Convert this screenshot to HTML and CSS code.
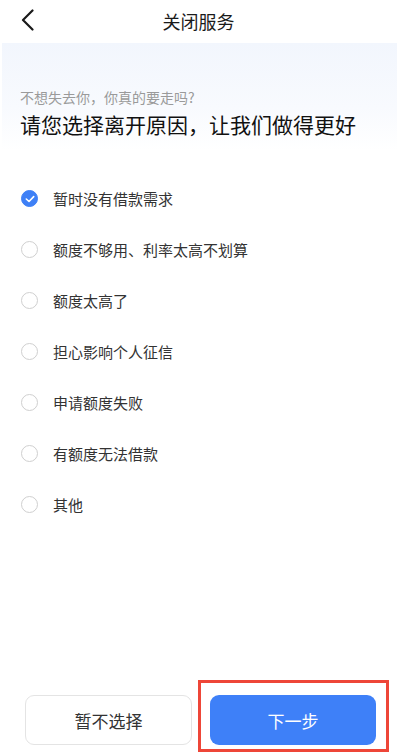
FILE: index.html
```html
<!DOCTYPE html>
<html lang="zh">
<head>
<meta charset="utf-8">
<link rel="stylesheet" href="styles.css">
</head>
<body>
<div class="page">
  <header class="topbar">
    <div class="back">
      <svg width="13" height="22" viewBox="0 0 13 22"><path d="M11.5 1.5 L2 11 L11.5 20.5" fill="none" stroke="#1a1a1a" stroke-width="2.2" stroke-linecap="round" stroke-linejoin="round"/></svg>
    </div>
    <div class="title">关闭服务</div>
    <div></div>
  </header>
  <section class="hero">
    <p class="sub">不想失去你，你真的要走吗?</p>
    <h1 class="head">请您选择离开原因，让我们做得更好</h1>
  </section>
  <ul class="options">
    <li class="opt">
      <span class="radio checked"><svg width="10" height="8" viewBox="0 0 10 8"><path d="M1.3 4 L4 6.5 L8.7 1.6" fill="none" stroke="#fff" stroke-width="1.6" stroke-linecap="round" stroke-linejoin="round"/></svg></span>
      <span>暂时没有借款需求</span>
    </li>
    <li class="opt"><span class="radio"></span><span>额度不够用、利率太高不划算</span></li>
    <li class="opt"><span class="radio"></span><span>额度太高了</span></li>
    <li class="opt"><span class="radio"></span><span>担心影响个人征信</span></li>
    <li class="opt"><span class="radio"></span><span>申请额度失败</span></li>
    <li class="opt"><span class="radio"></span><span>有额度无法借款</span></li>
    <li class="opt"><span class="radio"></span><span>其他</span></li>
  </ul>
  <footer class="footer">
    <button class="btn ghost">暂不选择</button>
    <div class="highlight">
      <button class="btn primary">下一步</button>
    </div>
  </footer>
</div>
</body>
</html>
```
FILE: styles.css
```css
* { box-sizing: border-box; }
html, body { margin: 0; padding: 0; background: #fff; }
body {
  font-family: "Noto Sans CJK SC", "Noto Sans", sans-serif;
  color: #222;
}
.page {
  display: flex;
  flex-direction: column;
  min-height: 756px;
  height: 756px;
}
.topbar {
  height: 43px;
  display: grid;
  grid-template-columns: 60px 1fr 60px;
  align-items: center;
}
.back {
  padding-left: 21px;
  display: flex;
  align-items: center;
  height: 43px;
  padding-bottom: 4px;
}
.title {
  text-align: center;
  font-size: 18px;
  color: #1a1a1a;
  padding-bottom: 2px;
}
.hero {
  margin-left: 2px;
  height: 108px;
  padding: 44px 0 0 18px;
  background: linear-gradient(180deg, #f2f6fd 0%, #f8fafe 60%, #ffffff 100%);
}
.sub {
  margin: 0;
  font-size: 14px;
  line-height: 20px;
  color: #9a9a9a;
}
.head {
  margin: 3px 0 0;
  font-size: 21px;
  font-weight: normal;
  line-height: 28px;
  color: #111;
}
.options {
  list-style: none;
  margin: 0;
  padding: 22px 0 0 21px;
}
.opt {
  height: 51px;
  display: flex;
  align-items: center;
  gap: 15px;
  font-size: 15px;
  color: #333;
}
.radio {
  width: 17px;
  height: 17px;
  border-radius: 50%;
  border: 1px solid #cfcfcf;
  display: flex;
  align-items: center;
  justify-content: center;
  flex: none;
}
.radio.checked {
  background: #3e80f6;
  border-color: #3e80f6;
}
.footer {
  margin-top: auto;
  display: flex;
  align-items: flex-end;
  padding: 0 8px 4px 25px;
  gap: 6px;
}
.btn {
  font-family: inherit;
  height: 50px;
  border-radius: 9px;
  font-size: 17px;
  cursor: pointer;
}
.ghost {
  width: 167px;
  margin-bottom: 7px;
  background: #fff;
  border: 1px solid #e4e4e4;
  color: #333;
}
.highlight {
  width: 191px;
  height: 72px;
  border: 3px solid #ee4638;
  padding: 12px 10px 4px 9px;
}
.primary {
  width: 166px;
  background: #3e80f8;
  border: none;
  color: #fff;
}
```
